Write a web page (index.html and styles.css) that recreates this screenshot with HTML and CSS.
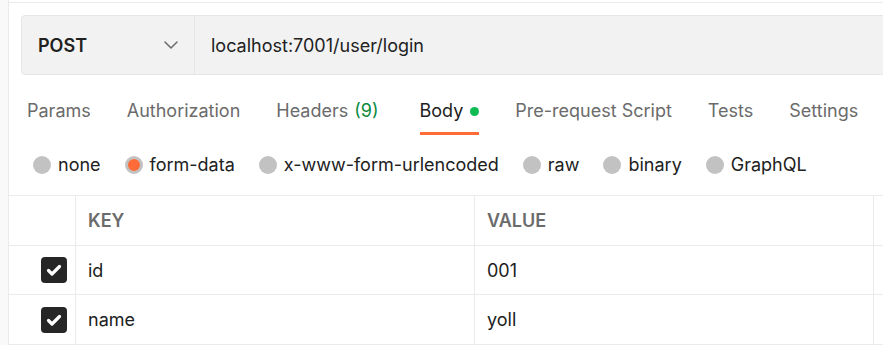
FILE: index.html
```html
<!DOCTYPE html>
<html>
<head>
<meta charset="utf-8">
<link rel="stylesheet" href="styles.css">
</head>
<body>
<div class="app">
  <div class="rail"></div>
  <div class="main">
    <div class="request-bar">
      <div class="method">
        <span class="method-name">POST</span>
        <svg class="chevron" width="14" height="8" viewBox="0 0 14 8"><polyline points="1,1 7,7 13,1" fill="none" stroke="#6b6b6b" stroke-width="1.5" stroke-linecap="round" stroke-linejoin="round"/></svg>
      </div>
      <div class="url">localhost:7001/user/login</div>
    </div>

    <div class="tabs">
      <div class="tab">Params</div>
      <div class="tab">Authorization</div>
      <div class="tab">Headers <span class="count">(9)</span></div>
      <div class="tab active">Body <span class="dot"></span></div>
      <div class="tab">Pre-request Script</div>
      <div class="tab">Tests</div>
      <div class="tab">Settings</div>
    </div>

    <div class="radios">
      <div class="radio"><span class="circle"></span>none</div>
      <div class="radio"><span class="circle selected"></span>form-data</div>
      <div class="radio"><span class="circle"></span>x-www-form-urlencoded</div>
      <div class="radio"><span class="circle"></span>raw</div>
      <div class="radio"><span class="circle"></span>binary</div>
      <div class="radio"><span class="circle"></span>GraphQL</div>
    </div>

    <div class="table">
      <div class="row head">
        <div class="cell check"></div>
        <div class="cell">KEY</div>
        <div class="cell">VALUE</div>
        <div class="cell last"></div>
      </div>
      <div class="row r1">
        <div class="cell check"><span class="box"><svg width="26" height="26" viewBox="0 0 26 26"><polyline points="7.5,13.5 11,17 18.5,9.5" fill="none" stroke="#fff" stroke-width="3.2" stroke-linecap="round" stroke-linejoin="round"/></svg></span></div>
        <div class="cell">id</div>
        <div class="cell">001</div>
        <div class="cell last"></div>
      </div>
      <div class="row r2">
        <div class="cell check"><span class="box"><svg width="26" height="26" viewBox="0 0 26 26"><polyline points="7.5,13.5 11,17 18.5,9.5" fill="none" stroke="#fff" stroke-width="3.2" stroke-linecap="round" stroke-linejoin="round"/></svg></span></div>
        <div class="cell">name</div>
        <div class="cell">yoll</div>
        <div class="cell last"></div>
      </div>
    </div>
  </div>
</div>
</body>
</html>
```

FILE: styles.css
```css
html, body {
  margin: 0;
  padding: 0;
  background: #ffffff;
}
body {
  font-family: Inter, "Noto Sans", sans-serif;
  font-size: 18px;
  color: #212121;
  width: 883px;
  height: 345px;
  overflow: hidden;
}
.app {
  display: flex;
  height: 345px;
}
.rail {
  width: 8px;
  flex: none;
  background: #f9f9f9;
  border-right: 1px solid #ebebeb;
}
.main {
  flex: 1;
  min-width: 0;
  margin-top: 2px;
  border-top: 1px solid #ebebeb;
  overflow: hidden;
}
.request-bar {
  display: flex;
  box-sizing: border-box;
  height: 60px;
  margin: 12px 0 0 12px;
  width: 900px;
  background: #f2f2f2;
  border: 1px solid #e6e6e6;
  border-radius: 4px;
}
.method {
  box-sizing: border-box;
  width: 173px;
  flex: none;
  display: flex;
  align-items: center;
  justify-content: space-between;
  padding: 0 16px;
  border-right: 1px solid #e6e6e6;
}
.method-name {
  font-weight: 600;
  color: #212121;
}
.url {
  display: flex;
  align-items: center;
  padding-left: 16px;
  color: #212121;
}
.tabs {
  display: flex;
  gap: 36px;
  margin: 24px 0 0 18px;
}
.tab {
  display: flex;
  align-items: center;
  line-height: 24px;
  padding-bottom: 9px;
  border-bottom: 3px solid transparent;
  color: #6b6b6b;
  white-space: nowrap;
}
.tab .count {
  color: #0a8a3e;
  margin-left: 6px;
}
.tab.active {
  color: #212121;
  border-bottom-color: #ff6c37;
  margin-left: 5px;
}
.dot {
  width: 9px;
  height: 9px;
  border-radius: 50%;
  background: #0cbb52;
  margin-left: 7px;
}
.radios {
  display: flex;
  gap: 24px;
  margin: 18px 0 0 24px;
}
.radio {
  display: flex;
  align-items: center;
  gap: 7px;
  line-height: 24px;
  white-space: nowrap;
}
.circle {
  box-sizing: border-box;
  width: 18px;
  height: 18px;
  border-radius: 50%;
  background: #c2c2c2;
}
.circle.selected {
  background: #ff6c37;
  border: 3px solid #c2c2c2;
}
.table {
  margin-top: 18px;
  border-top: 1px solid #ebebeb;
}
.row {
  display: grid;
  grid-template-columns: 67px 399px 399px 1fr;
  border-bottom: 1px solid #ebebeb;
  height: 49px;
}
.row.r1 {
  height: 48px;
}
.cell {
  display: flex;
  align-items: center;
  padding-left: 12px;
  border-right: 1px solid #ebebeb;
  white-space: nowrap;
}
.cell.last {
  border-right: none;
}
.head .cell {
  font-weight: 600;
  font-size: 18px;
  color: #6b6b6b;
}
.cell.check {
  justify-content: flex-end;
  padding: 0 8px 0 0;
}
.box {
  width: 26px;
  height: 26px;
  border-radius: 4px;
  background: #262626;
  display: flex;
}
```
